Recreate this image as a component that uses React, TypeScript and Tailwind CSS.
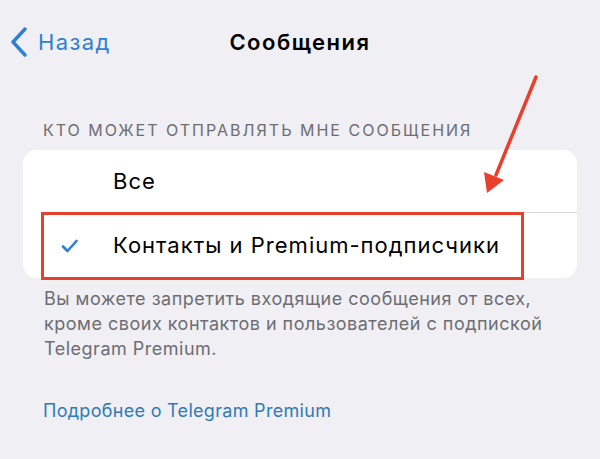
const App = () => {
  return (
    <div
      className="relative w-[600px] h-[459px] overflow-hidden bg-[#efeff4] text-black"
      style={{ fontFamily: 'Inter, "Noto Sans", sans-serif' }}
    >
      {/* навигация */}
      <div className="grid grid-cols-[1fr_auto_1fr] items-center h-[84px] px-[10px]">
        <div className="flex items-center gap-[10px] text-[#2f7fd2]">
          <svg width="18" height="30" viewBox="0 0 18 30" fill="none">
            <path d="M15 2 L3 15 L15 28" stroke="currentColor" strokeWidth="3.4" strokeLinecap="round" strokeLinejoin="round" />
          </svg>
          <span className="text-[22px] leading-none tracking-[1.4px]">Назад</span>
        </div>
        <div className="text-[22px] font-semibold leading-none tracking-[1.5px]">Сообщения</div>
        <div></div>
      </div>

      {/* заголовок секции */}
      <div className="px-[43px] pt-[36px] pb-[10px] text-[16px] leading-[20px] tracking-[2px] text-[#6d6d72]">
        КТО МОЖЕТ ОТПРАВЛЯТЬ МНЕ СООБЩЕНИЯ
      </div>

      {/* карточка */}
      <div className="relative mx-[23px] bg-white rounded-[14px]">
        <div className="flex items-center h-[63px] border-b border-[#d8d8dc] ml-[18px]">
          <span className="pl-[72px] text-[22px] tracking-[1px]">Все</span>
        </div>
        <div className="flex items-center h-[65px] pl-[37px]">
          <span className="w-[53px] text-[#2f7fd2]">
            <svg width="18" height="14" viewBox="0 0 18 14" fill="none">
              <path d="M3 7.5 L7.5 12 L16.5 2" stroke="currentColor" strokeWidth="2.6" strokeLinecap="round" strokeLinejoin="round" />
            </svg>
          </span>
          <span className="text-[22px] tracking-[1px]">Контакты и Premium-подписчики</span>
        </div>

        {/* рамка-выделение */}
        <div className="absolute left-[18px] top-[62px] w-[483px] h-[68px] border-[3px] border-[#e5402b]"></div>
      </div>

      {/* описание */}
      <div className="px-[44px] pt-[8px] text-[18px] leading-[25px] tracking-[0.5px] text-[#6d6d72]">
        Вы можете запретить входящие сообщения от всех,
        <br />
        кроме своих контактов и пользователей с подпиской
        <br />
        Telegram Premium.
      </div>

      <div className="px-[43px] pt-[36px] text-[18px] tracking-[0.3px] text-[#2f7ab8]">Подробнее о Telegram Premium</div>

      {/* стрелка */}
      <svg className="absolute left-0 top-0" width="600" height="459" viewBox="0 0 600 459">
        <line x1="536" y1="77" x2="496" y2="175" stroke="#e8402a" strokeWidth="3.5" strokeLinecap="round" />
        <polygon points="487,193 484,172 504,180" fill="#e8402a" />
      </svg>
    </div>
  );
};

export default App;
